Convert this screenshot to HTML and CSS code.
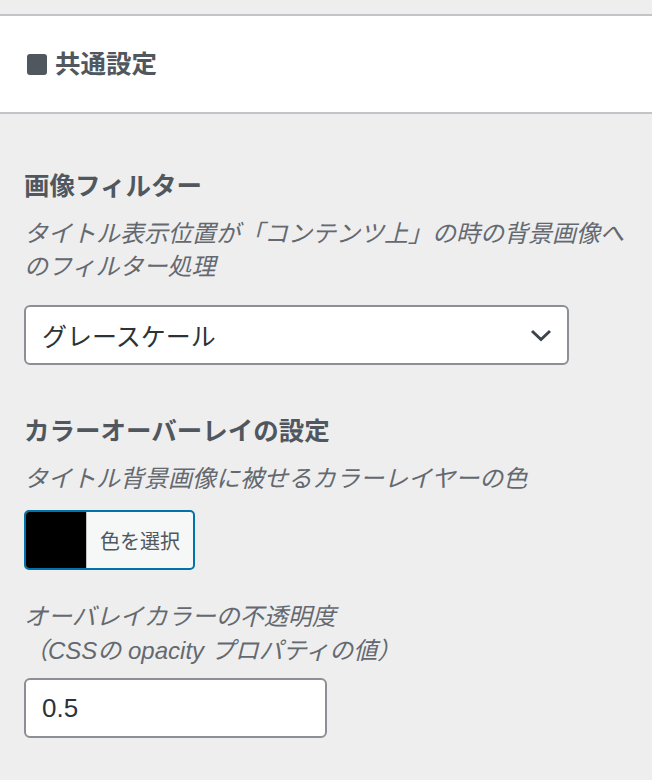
FILE: index.html
```html
<!DOCTYPE html>
<html lang="ja">
<head>
    <meta charset="UTF-8">
    <meta name="viewport" content="width=device-width, initial-scale=1.0">
    <title>共通設定</title>
    <link rel="stylesheet" href="styles.css">
</head>
<body>
    <div class="section-head">
        <span class="section-mark"></span>
        <h2 class="section-title">共通設定</h2>
    </div>

    <div class="panel">
        <div class="control first">
            <h3 class="control-title">画像フィルター</h3>
            <p class="control-desc">タイトル表示位置が「コンテンツ上」の時の背景画像へのフィルター処理</p>
            <div class="select">
                <span>グレースケール</span>
                <svg class="chevron" width="22" height="13" viewBox="0 0 22 13">
                    <path d="M2 2 L11 10.5 L20 2" fill="none" stroke="#3c434a" stroke-width="3"/>
                </svg>
            </div>
        </div>

        <div class="control">
            <h3 class="control-title">カラーオーバーレイの設定</h3>
            <p class="control-desc">タイトル背景画像に被せるカラーレイヤーの色</p>
            <div class="color-result">
                <span class="swatch"></span>
                <span class="color-label">色を選択</span>
            </div>
        </div>

        <div class="control third">
            <p class="control-desc">オーバレイカラーの不透明度<br>（CSSの opacity プロパティの値）</p>
            <div class="text-input">0.5</div>
        </div>
    </div>
</body>
</html>
```

FILE: styles.css
```css
body {
    margin: 0;
    background: #eeeeee;
    font-family: "Liberation Sans", "Noto Sans CJK JP", sans-serif;
    color: #50575e;
}
.section-head {
    margin-top: 14px;
    height: 96px;
    background: #fff;
    border-top: 2px solid #c3c4c7;
    border-bottom: 2px solid #c3c4c7;
    display: flex;
    align-items: center;
    padding-left: 27px;
}
.section-mark {
    width: 20px;
    height: 21px;
    border-radius: 3px;
    background: #50575e;
    margin-right: 8px;
}
.section-title {
    margin: 0;
    font-size: 25.5px;
    line-height: 34px;
    font-weight: bold;
}
.panel {
    padding: 0 24px;
}
.control {
    margin-top: 49px;
}
.control.first {
    margin-top: 55px;
}
.control.third {
    margin-top: 30px;
}
.control-title {
    margin: 0;
    font-size: 25.5px;
    line-height: 34px;
    font-weight: bold;
    color: #50575e;
}
.control-desc {
    margin: 14px 0 0;
    font-size: 24px;
    line-height: 33px;
    font-style: italic;
    color: #646970;
}
.control.third .control-desc {
    margin-top: 0;
    line-height: 34px;
}
.select {
    margin-top: 22px;
    box-sizing: border-box;
    width: 545px;
    height: 60px;
    background: #fff;
    border: 2px solid #8c8f94;
    border-radius: 6px;
    display: flex;
    align-items: center;
    justify-content: space-between;
    padding: 0 15px 0 16px;
    font-size: 25px;
    color: #2c3338;
}
.color-result {
    margin-top: 15px;
    box-sizing: border-box;
    width: 171px;
    height: 60px;
    border: 2px solid #0073aa;
    border-radius: 5px;
    display: flex;
    overflow: hidden;
    background: #f6f7f7;
}
.swatch {
    width: 60px;
    background: #000;
    border-right: 1px solid #c3c4c7;
}
.color-label {
    flex: 1;
    display: flex;
    align-items: center;
    justify-content: center;
    font-size: 20px;
    color: #50575e;
}
.text-input {
    margin-top: 10px;
    box-sizing: border-box;
    width: 303px;
    height: 60px;
    background: #fff;
    border: 2px solid #8c8f94;
    border-radius: 6px;
    display: flex;
    align-items: center;
    padding-left: 16px;
    font-size: 26px;
    color: #2c3338;
}
```
